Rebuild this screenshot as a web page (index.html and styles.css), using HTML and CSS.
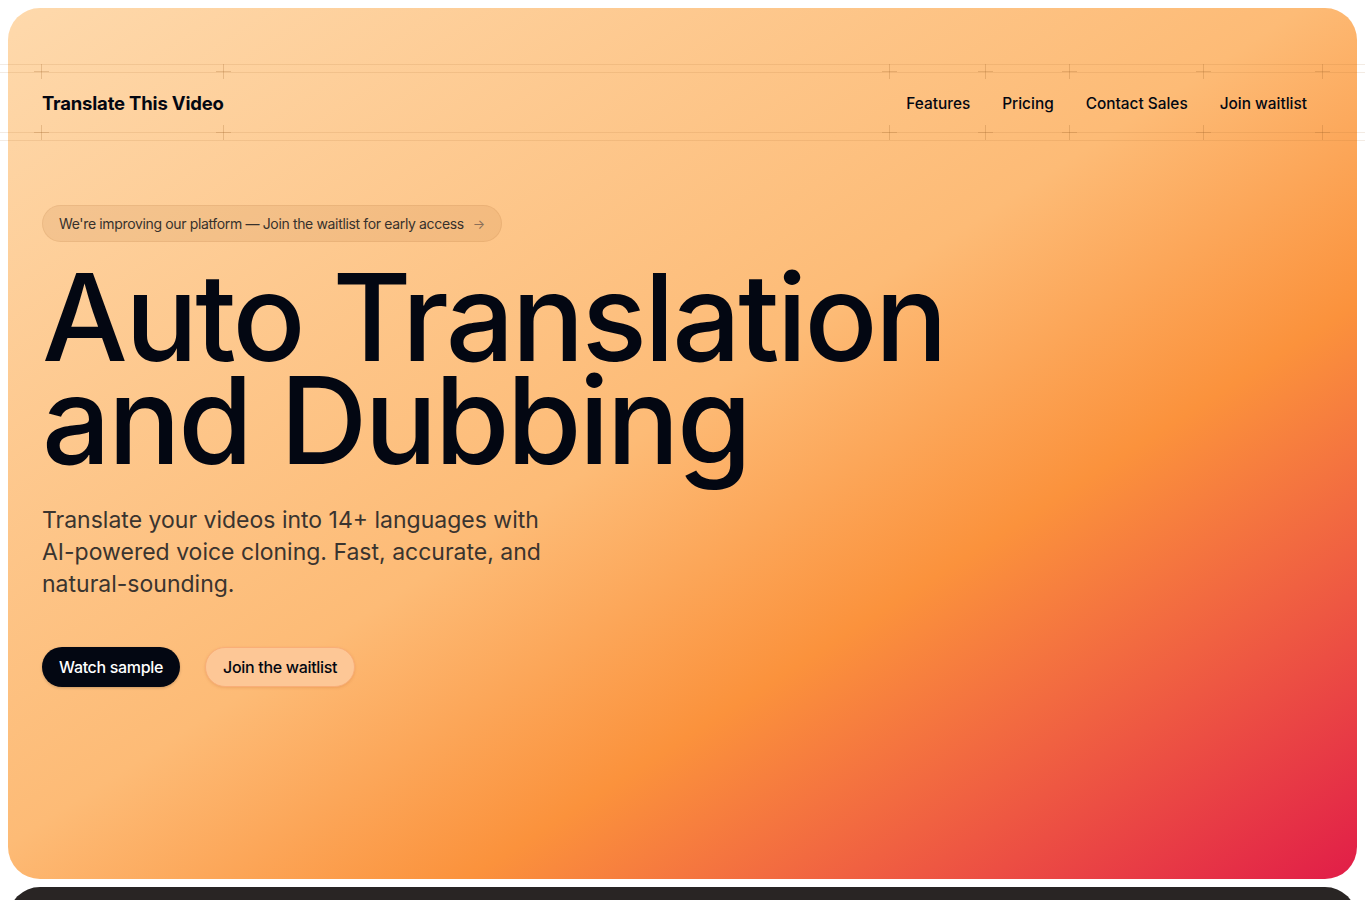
FILE: index.html
```html
<!DOCTYPE html>
<html lang="en">
<head>
  <meta charset="UTF-8" />
  <meta name="viewport" content="width=device-width, initial-scale=1.0" />
  <title>Translate This Video</title>
  <link rel="stylesheet" href="styles.css">
</head>
<body>
  <section class="hero">
    <!-- ナビ -->
    <div class="nav-frame">
      <nav class="nav">
        <a class="logo cell" href="#">
          <span class="cross tl"></span><span class="cross bl"></span>
          <span class="cross tr"></span><span class="cross br"></span>
          Translate This Video
        </a>
        <div class="links">
          <a class="cell" href="#"><span class="cross tl"></span><span class="cross bl"></span>Features</a>
          <a class="cell" href="#"><span class="cross tl"></span><span class="cross bl"></span>Pricing</a>
          <a class="cell" href="#"><span class="cross tl"></span><span class="cross bl"></span>Contact Sales</a>
          <a class="cell" href="#">
            <span class="cross tl"></span><span class="cross bl"></span>
            <span class="cross tr"></span><span class="cross br"></span>
            Join waitlist
          </a>
        </div>
      </nav>
    </div>

    <div class="content">
      <a class="badge" href="#">
        We're improving our platform — Join the waitlist for early access
        <span class="arrow">→</span>
      </a>
      <h1>Auto Translation<br>and Dubbing</h1>
      <p class="lead">Translate your videos into 14+ languages with AI-powered voice cloning. Fast, accurate, and natural-sounding.</p>
      <div class="actions">
        <a class="btn dark" href="#">Watch sample</a>
        <a class="btn light" href="#">Join the waitlist</a>
      </div>
    </div>
  </section>

  <section class="next"></section>
</body>
</html>
```

FILE: styles.css
```css
* {
  box-sizing: border-box;
}
body {
  margin: 0;
  padding: 8px;
  font-family: Inter, "Noto Sans", sans-serif;
  color: #030712;
  background: #fff;
  overflow: hidden;
}
a {
  color: inherit;
  text-decoration: none;
}

.hero {
  height: 871px;
  border-radius: 32px;
  padding: 56px 34px 0;
  background: linear-gradient(to bottom right, #fed9ac 0%, #fdbb76 48%, #fb923c 67%, #e11d48 100%);
}

/* ナビ */
.nav-frame {
  position: relative;
  padding: 8px 0;
}
.nav-frame::before,
.nav::before {
  content: "";
  position: absolute;
  top: 0;
  bottom: 0;
  left: -42px;
  right: -42px;
  border-top: 1px solid rgba(160, 100, 40, 0.13);
  border-bottom: 1px solid rgba(160, 100, 40, 0.13);
  pointer-events: none;
}
.nav {
  position: relative;
  height: 61px;
  display: flex;
  justify-content: space-between;
  align-items: stretch;
}
.cell {
  position: relative;
  display: flex;
  align-items: center;
  padding-top: 1px;
}
.logo {
  font-size: 18.5px;
  font-weight: 700;
  letter-spacing: -0.01em;
}
.links {
  display: flex;
}
.links .cell {
  padding: 1px 16px 0;
  font-size: 15.4px;
  font-weight: 500;
}
.cross {
  position: absolute;
  width: 15px;
  height: 15px;
  margin: -8px 0 0 -8px;
}
.cross::before,
.cross::after {
  content: "";
  position: absolute;
  background: rgba(160, 100, 40, 0.25);
}
.cross::before {
  left: 7px;
  top: 0;
  width: 1px;
  height: 15px;
}
.cross::after {
  top: 7px;
  left: 0;
  width: 15px;
  height: 1px;
}
.cross.tl { top: 0; left: 0; }
.cross.bl { top: 100%; left: 0; }
.cross.tr { top: 0; left: 100%; }
.cross.br { top: 100%; left: 100%; }

/* ヒーロー */
.content {
  padding-top: 64px;
}
.badge {
  display: inline-flex;
  align-items: center;
  gap: 9px;
  height: 37px;
  padding: 0 16px;
  border-radius: 999px;
  font-size: 14px;
  letter-spacing: -0.025em;
  color: #37312c;
  background: rgba(170, 110, 50, 0.12);
  border: 1px solid rgba(170, 110, 50, 0.12);
}
.arrow {
  color: #8a6f58;
  font-size: 13px;
}
h1 {
  margin: 24px 0 0;
  font-size: 121px;
  line-height: 103px;
  font-weight: 500;
  letter-spacing: -0.022em;
}
.lead {
  width: 520px;
  margin: 32px 0 0;
  font-size: 23px;
  line-height: 32px;
  color: #3a342f;
}
.actions {
  display: flex;
  gap: 25px;
  margin-top: 47px;
}
.btn {
  display: inline-flex;
  align-items: center;
  height: 40px;
  padding: 0 17px;
  border-radius: 999px;
  font-size: 16px;
  font-weight: 500;
  letter-spacing: -0.02em;
}
.btn.dark {
  background: #030712;
  color: #fff;
  box-shadow: 0 1px 3px rgba(0, 0, 0, 0.2);
}
.btn.light {
  background: #fdc796;
  border: 1px solid #f9ae78;
  box-shadow: 0 1px 3px rgba(180, 90, 30, 0.2);
}

.next {
  height: 300px;
  margin-top: 8px;
  border-radius: 32px;
  background: #292524;
}
```
